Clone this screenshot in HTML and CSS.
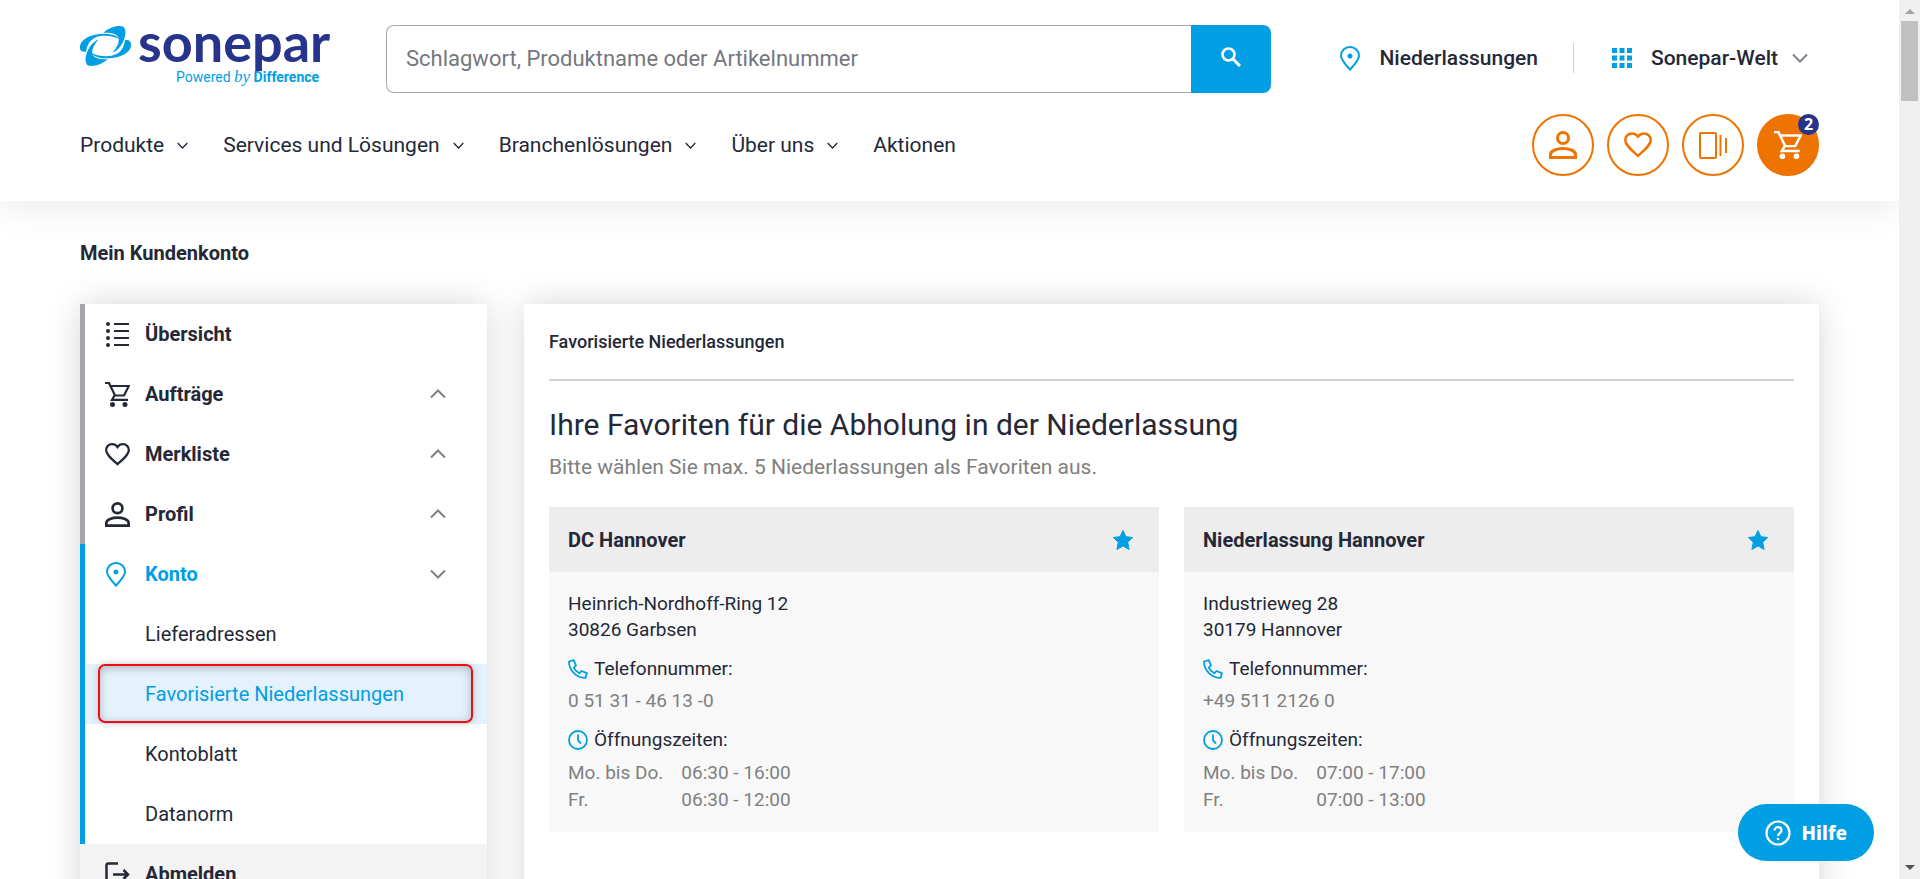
FILE: index.html
```html
<!DOCTYPE html>
<html lang="de">
<head>
  <meta charset="UTF-8" />
  <meta name="viewport" content="width=device-width, initial-scale=1.0" />
  <title>Favorisierte Niederlassungen</title>
  <link rel="stylesheet" href="styles.css">
</head>
<body>

  <!-- shared icons -->
  <svg class="sprite" aria-hidden="true">
    <symbol id="i-down" viewBox="0 0 16 10"><path d="M1 1.5l7 7 7-7" fill="none" stroke="currentColor" stroke-width="2"/></symbol>
    <symbol id="i-up" viewBox="0 0 16 10"><path d="M1 8.5l7-7 7 7" fill="none" stroke="currentColor" stroke-width="2"/></symbol>
    <symbol id="i-pin" viewBox="0 0 20 25"><path d="M10 23.5C6 19 1 14 1 9.700a9 8.700 0 0 1 18 0C19 14 14 19 10 23.500z" fill="none" stroke="currentColor" stroke-width="2"/><circle cx="10" cy="10" r="2.500" fill="currentColor"/></symbol>
    <symbol id="i-user" viewBox="0 0 28 28"><g fill="none" stroke="currentColor" stroke-width="3"><circle cx="14" cy="7" r="5.500"/><path d="M1.500 26.500v-3c0-4 7-6 12.500-6s12.500 2 12.500 6v3z"/></g></symbol>
    <symbol id="i-heart" viewBox="0 0 28 26"><path d="M14 23.800C7 17.500 1.300 13 1.300 8.200a6.600 6.600 0 0 1 6.700-6.800c2.400 0 4.600 1.200 6 3.200 1.400-2 3.600-3.200 6-3.200a6.600 6.600 0 0 1 6.700 6.800C26.700 13 21 17.500 14 23.800z" fill="none" stroke="currentColor" stroke-width="2.500"/></symbol>
    <symbol id="i-cart" viewBox="0 0 25 25"><path d="M0 1h4l6 12.500h9L23.800 4H5.500M9.500 13.500L7 17.800h16" fill="none" stroke="currentColor" stroke-width="2.200"/><circle cx="7.500" cy="22.500" r="2.500" fill="currentColor"/><circle cx="20" cy="22.500" r="2.500" fill="currentColor"/></symbol>
    <symbol id="i-star" viewBox="0 0 20 20"><path d="M10 .5l2.900 6.200 6.800.8-5 4.700 1.400 7.300-6.100-3.600-6.100 3.600 1.400-7.300-5-4.700 6.800-.8z" fill="currentColor" stroke="currentColor" stroke-linejoin="round"/></symbol>
    <symbol id="i-phone" viewBox="0 0 20 20"><path d="M1 2.500L5.800 1.200 8 6.600 5.700 8.700c1.200 2.500 3 4.300 5.600 5.600l2.100-2.300 5.500 2.200-1.400 4.700C8.500 18.900 1 11.500 1 2.500z" fill="none" stroke="currentColor" stroke-width="1.800" stroke-linejoin="round"/></symbol>
    <symbol id="i-clock" viewBox="0 0 20 20"><circle cx="10" cy="10" r="9" fill="none" stroke="currentColor" stroke-width="1.800"/><path d="M10 4.500v6l3 3" fill="none" stroke="currentColor" stroke-width="1.800"/></symbol>
  </svg>

  <div class="page">
    <header class="header">
      <div class="header-top">
        <a class="logo" href="#">
          <svg width="52" height="40" viewBox="60 80 156 120" fill="#009fe3">
            <g id="swirl">
              <path d="M62 153C50 126 88 101 138 103c22 1 38 9 47 20-22-15-60-18-80-8-16 8-24 22-27 43-8 0-13-1-16-5z"/>
              <path d="M130 101c18-18 46-24 60-19 12 11 6 38-8 58-8 11-18 18-24 19 14-15 22-34 17-46-8-11-25-14-45-12z"/>
            </g>
            <use href="#swirl" transform="rotate(180 136.500 140)"/>
          </svg>
          <span class="logo-text">
            <span class="logo-name">sonepar</span>
            <span class="logo-claim">Powered <i>by</i> <b>Difference</b></span>
          </span>
        </a>
        <form class="search">
          <input type="text" aria-label="Suche" placeholder="Schlagwort, Produktname oder Artikelnummer">
          <button type="submit" aria-label="Suchen">
            <svg width="20" height="20" viewBox="0 0 20 20"><circle cx="7.500" cy="7.500" r="6" fill="none" stroke="#fff" stroke-width="2.600"/><path d="M12 12l7 7" stroke="#fff" stroke-width="3"/></svg>
          </button>
        </form>
        <div class="top-links">
          <a href="#"><svg class="blue" width="20" height="25"><use href="#i-pin"/></svg>Niederlassungen</a>
          <span class="divider"></span>
          <button type="button">
            <svg class="blue" width="20" height="20" viewBox="0 0 20 20" fill="currentColor"><path d="M0 0h5v5H0zM7.500 0h5v5h-5zM15 0h5v5h-5zM0 7.500h5v5H0zM7.500 7.500h5v5h-5zM15 7.500h5v5h-5zM0 15h5v5H0zM7.500 15h5v5h-5zM15 15h5v5h-5z"/></svg>
            Sonepar-Welt
            <svg class="grey" width="16" height="10"><use href="#i-down"/></svg>
          </button>
        </div>
      </div>

      <div class="header-bottom">
        <nav class="nav">
          <a href="#">Produkte <svg width="11" height="7"><use href="#i-down"/></svg></a>
          <a href="#">Services und Lösungen <svg width="11" height="7"><use href="#i-down"/></svg></a>
          <a href="#">Branchenlösungen <svg width="11" height="7"><use href="#i-down"/></svg></a>
          <a href="#">Über uns <svg width="11" height="7"><use href="#i-down"/></svg></a>
          <a href="#">Aktionen</a>
        </nav>
        <div class="actions">
          <a class="circle" href="#" aria-label="Konto"><svg width="28" height="28"><use href="#i-user"/></svg></a>
          <a class="circle" href="#" aria-label="Merkliste"><svg width="28" height="26"><use href="#i-heart"/></svg></a>
          <a class="circle" href="#" aria-label="Vergleich">
            <svg width="28" height="27" viewBox="0 0 28 27" fill="none" stroke="currentColor"><rect x="1" y="1" width="16" height="25" rx="1" stroke-width="2"/><path d="M21.500 3v21M27 6v15" stroke-width="2"/></svg>
          </a>
          <a class="circle filled" href="#" aria-label="Warenkorb"><svg width="28" height="28"><use href="#i-cart"/></svg><span class="badge">2</span></a>
        </div>
      </div>
    </header>

    <h2 class="page-title">Mein Kundenkonto</h2>

    <div class="columns">
      <nav class="sidebar">
        <a class="item" href="#">
          <svg width="25" height="25" viewBox="0 0 25 25"><g fill="currentColor"><circle cx="3" cy="2" r="2"/><circle cx="3" cy="9" r="2"/><circle cx="3" cy="16" r="2"/><circle cx="3" cy="23" r="2"/></g><path d="M9 2h15M9 9h15M9 16h15M9 23h15" stroke="currentColor" stroke-width="2"/></svg>
          Übersicht
        </a>
        <a class="item" href="#"><svg width="25" height="25"><use href="#i-cart"/></svg>Aufträge<svg class="arrow" width="16" height="10"><use href="#i-up"/></svg></a>
        <a class="item" href="#"><svg width="25" height="25"><use href="#i-heart"/></svg>Merkliste<svg class="arrow" width="16" height="10"><use href="#i-up"/></svg></a>
        <a class="item" href="#"><svg width="25" height="25"><use href="#i-user"/></svg>Profil<svg class="arrow" width="16" height="10"><use href="#i-up"/></svg></a>
        <a class="item open" href="#"><svg width="22" height="25"><use href="#i-pin"/></svg>Konto<svg class="arrow" width="16" height="10"><use href="#i-down"/></svg></a>
        <a class="item sub" href="#">Lieferadressen</a>
        <a class="item sub current" href="#">Favorisierte Niederlassungen</a>
        <a class="item sub" href="#">Kontoblatt</a>
        <a class="item sub" href="#">Datanorm</a>
        <a class="item logout" href="#">
          <svg width="25" height="25" viewBox="0 0 25 25" fill="none" stroke="currentColor" stroke-width="2.500"><path d="M13 1.500H3a1.500 1.500 0 0 0-1.500 1.500v19a1.500 1.500 0 0 0 1.500 1.500h10M8 12.500h15M18.500 8l4.500 4.500-4.500 4.500"/></svg>
          Abmelden
        </a>
      </nav>

      <main class="content">
        <h3 class="content-title">Favorisierte Niederlassungen</h3>
        <h1>Ihre Favoriten für die Abholung in der Niederlassung</h1>
        <p class="hint">Bitte wählen Sie max. 5 Niederlassungen als Favoriten aus.</p>

        <div class="cards">
          <section class="card">
            <div class="card-head">
              <h4>DC Hannover</h4>
              <button type="button" aria-label="Favorit entfernen"><svg width="20" height="20"><use href="#i-star"/></svg></button>
            </div>
            <div class="card-body">
              <p>Heinrich-Nordhoff-Ring 12<br>30826 Garbsen</p>
              <p class="label"><svg width="20" height="20"><use href="#i-phone"/></svg>Telefonnummer:</p>
              <p class="value">0 51 31 - 46 13 -0</p>
              <p class="label"><svg width="20" height="20"><use href="#i-clock"/></svg>Öffnungszeiten:</p>
              <table class="hours">
                <tr><td>Mo. bis Do.</td><td>06:30 - 16:00</td></tr>
                <tr><td>Fr.</td><td>06:30 - 12:00</td></tr>
              </table>
            </div>
          </section>

          <section class="card">
            <div class="card-head">
              <h4>Niederlassung Hannover</h4>
              <button type="button" aria-label="Favorit entfernen"><svg width="20" height="20"><use href="#i-star"/></svg></button>
            </div>
            <div class="card-body">
              <p>Industrieweg 28<br>30179 Hannover</p>
              <p class="label"><svg width="20" height="20"><use href="#i-phone"/></svg>Telefonnummer:</p>
              <p class="value">+49 511 2126 0</p>
              <p class="label"><svg width="20" height="20"><use href="#i-clock"/></svg>Öffnungszeiten:</p>
              <table class="hours">
                <tr><td>Mo. bis Do.</td><td>07:00 - 17:00</td></tr>
                <tr><td>Fr.</td><td>07:00 - 13:00</td></tr>
              </table>
            </div>
          </section>
        </div>
      </main>
    </div>
  </div>

  <div class="scrollbar" aria-hidden="true">
    <svg width="10" height="5" viewBox="0 0 10 5"><path d="M0 5l5-5 5 5z" fill="#a3a3a3"/></svg>
    <div class="track"><div class="thumb"></div></div>
    <svg width="10" height="5" viewBox="0 0 10 5"><path d="M0 0l5 5 5-5z" fill="#505050"/></svg>
  </div>

  <button class="help" type="button">
    <svg width="26" height="26" viewBox="0 0 26 26" fill="none" stroke="#fff" stroke-width="2.200"><circle cx="13" cy="13" r="11.500"/><path d="M9.500 10.500c0-4.500 7-4.500 7 0 0 2.500-3.500 2.800-3.500 5.500"/><circle cx="13" cy="19" r="1.300" fill="#fff" stroke="none"/></svg>
    Hilfe
  </button>

</body>
</html>
```
FILE: styles.css
```css
* {
  box-sizing: border-box;
}

body {
  margin: 0;
  height: 100vh;
  display: flex;
  overflow: hidden;
  font-family: Roboto, sans-serif;
  font-size: 19px;
  color: #242837;
  background: #fff;
}

h1, h2, h3, h4, p {
  margin: 0;
}

a {
  color: inherit;
  text-decoration: none;
}

button {
  font: inherit;
  color: inherit;
  border: none;
  background: none;
  padding: 0;
  cursor: pointer;
}

svg {
  flex-shrink: 0;
}

.sprite {
  position: absolute;
  width: 0;
  height: 0;
}

.blue {
  color: #009fe3;
}

.grey {
  color: #808089;
}

.page {
  flex: 1;
  min-width: 0;
  height: 100vh;
  overflow: hidden;
}

/* header */
.header {
  padding: 25px 80px;
  background: #fff;
  box-shadow: 0 8px 32px rgba(0, 0, 0, 0.08);
}

.header-top {
  display: flex;
  align-items: flex-start;
}

.logo {
  display: flex;
  gap: 6px;
  width: 306px;
}

.logo svg {
  margin-top: 1px;
}

.logo-text {
  display: flex;
  flex-direction: column;
}

.logo-name {
  font-family: Lato, sans-serif;
  font-weight: 700;
  font-size: 54px;
  line-height: 34px;
  height: 43px;
  color: #27348b;
}

.logo-claim {
  padding-left: 38px;
  font-size: 14px;
  line-height: 18px;
  color: #009fe3;
}

.logo-claim i {
  font-family: "Liberation Serif", serif;
  font-size: 17px;
  line-height: 18px;
}

.search {
  flex: 1;
  display: flex;
  height: 68px;
}

.search input {
  flex: 1;
  min-width: 0;
  padding: 0 19px 2px;
  border: 1px solid #a5a7af;
  border-right: none;
  border-radius: 8px 0 0 8px;
  font-family: inherit;
  font-size: 22px;
}

.search input::placeholder {
  color: #757780;
}

.search button {
  width: 80px;
  background: #009fe3;
  border-radius: 0 8px 8px 0;
}

.top-links {
  display: flex;
  align-items: center;
  height: 66px;
  margin-left: 69px;
  padding-right: 11px;
  font-size: 21px;
  font-weight: 500;
}

.top-links a,
.top-links button {
  display: flex;
  align-items: center;
  gap: 19px;
}

.top-links .grey {
  margin-left: -5px;
}

.divider {
  width: 1px;
  height: 30px;
  margin: 0 38px 0 35px;
  background: #d0d0d4;
}

.header-bottom {
  display: flex;
  justify-content: space-between;
  align-items: center;
  margin-top: 21px;
}

.nav {
  display: flex;
  gap: 35px;
  font-size: 21px;
}

.nav a {
  display: flex;
  align-items: center;
  gap: 13px;
}

.actions {
  display: flex;
  gap: 13px;
}

.circle {
  position: relative;
  display: flex;
  align-items: center;
  justify-content: center;
  width: 62px;
  height: 62px;
  border: 2px solid #ef7300;
  border-radius: 50%;
  color: #ef7300;
}

.filled {
  background: #ef7300;
  color: #fff;
}

.badge {
  position: absolute;
  top: -2px;
  right: -2px;
  width: 21px;
  height: 21px;
  border-radius: 50%;
  background: #27348b;
  font-family: "Noto Sans", sans-serif;
  font-size: 16px;
  font-weight: 700;
  line-height: 21px;
  text-align: center;
}

.page-title {
  margin: 40px 80px 0;
  font-size: 20px;
  font-weight: 700;
  line-height: 24px;
}

.columns {
  display: flex;
  gap: 37px;
  padding: 39px 80px 0;
}

/* sidebar */
.sidebar {
  width: 407px;
  flex-shrink: 0;
  background: #fff;
  box-shadow: 0 0 32px rgba(0, 0, 0, 0.16);
}

.item {
  display: flex;
  align-items: center;
  gap: 15px;
  height: 60px;
  padding: 0 41px 0 20px;
  border-left: 5px solid #a5a7af;
  font-size: 20px;
  font-weight: 700;
}

.item .arrow {
  margin-left: auto;
  color: #808080;
}

.item.open {
  gap: 18px;
  border-color: #009fe3;
  color: #009fe3;
}

.item.sub {
  padding-left: 60px;
  border-color: #009fe3;
  font-weight: 400;
}

.item.current {
  position: relative;
  background: #e5f2fe;
  color: #009fe3;
}

.item.current::after {
  content: "";
  position: absolute;
  inset: 0 14px 1px 13px;
  border: 2px solid #f00c10;
  border-radius: 7px;
  box-shadow: 0 0 8px rgba(0, 0, 0, 0.2), inset 0 2px 10px rgba(0, 0, 0, 0.25);
}

.item.logout {
  border-left: none;
  padding-left: 25px;
  background: #f3f3f3;
}

/* content */
.content {
  flex: 1;
  min-width: 0;
  min-height: 700px;
  padding: 25px;
  background: #fff;
  box-shadow: 0 0 32px rgba(0, 0, 0, 0.16);
}

.content-title {
  margin-bottom: 24px;
  padding-bottom: 24px;
  border-bottom: 2px solid #d3d3d3;
  font-size: 18px;
  font-weight: 500;
  line-height: 26px;
}

.content h1 {
  font-size: 30px;
  font-weight: 400;
  line-height: 40px;
}

.hint {
  margin-top: 9px;
  font-size: 21px;
  line-height: 26px;
  color: #808080;
}

.cards {
  display: grid;
  grid-template-columns: 1fr 1fr;
  gap: 25px;
  margin-top: 27px;
}

.card {
  background: #f8f8f8;
}

.card-head {
  display: flex;
  justify-content: space-between;
  align-items: center;
  height: 65px;
  padding: 0 26px 0 19px;
  background: #ededed;
}

.card-head h4 {
  font-size: 20px;
  font-weight: 700;
}

.card-head button {
  display: flex;
  color: #009fe3;
}

.card-body {
  padding: 19px;
  line-height: 26px;
}

.label {
  display: flex;
  align-items: center;
  gap: 6px;
  margin-top: 13px;
}

.label svg {
  color: #009fe3;
}

.value {
  margin-top: 6px;
  color: #808080;
}

.hours {
  margin-top: 6px;
  border-collapse: collapse;
  line-height: 27px;
  color: #808080;
}

.hours td {
  padding: 0 18px 0 0;
}

/* scrollbar */
.scrollbar {
  width: 21px;
  height: 100vh;
  display: flex;
  flex-direction: column;
  align-items: center;
  padding: 9px 0;
  background: #f0f0f0;
}

.track {
  flex: 1;
  padding-top: 7px;
}

.thumb {
  width: 17px;
  height: 80px;
  background: #c1c1c1;
}

/* floating help button */
.help {
  position: fixed;
  right: 46px;
  bottom: 18px;
  display: flex;
  align-items: center;
  gap: 11px;
  height: 57px;
  padding: 0 27px;
  border-radius: 29px;
  background: #009fe3;
  color: #fff;
  font-family: "Noto Sans", sans-serif;
  font-size: 19px;
  font-weight: 800;
}
```
